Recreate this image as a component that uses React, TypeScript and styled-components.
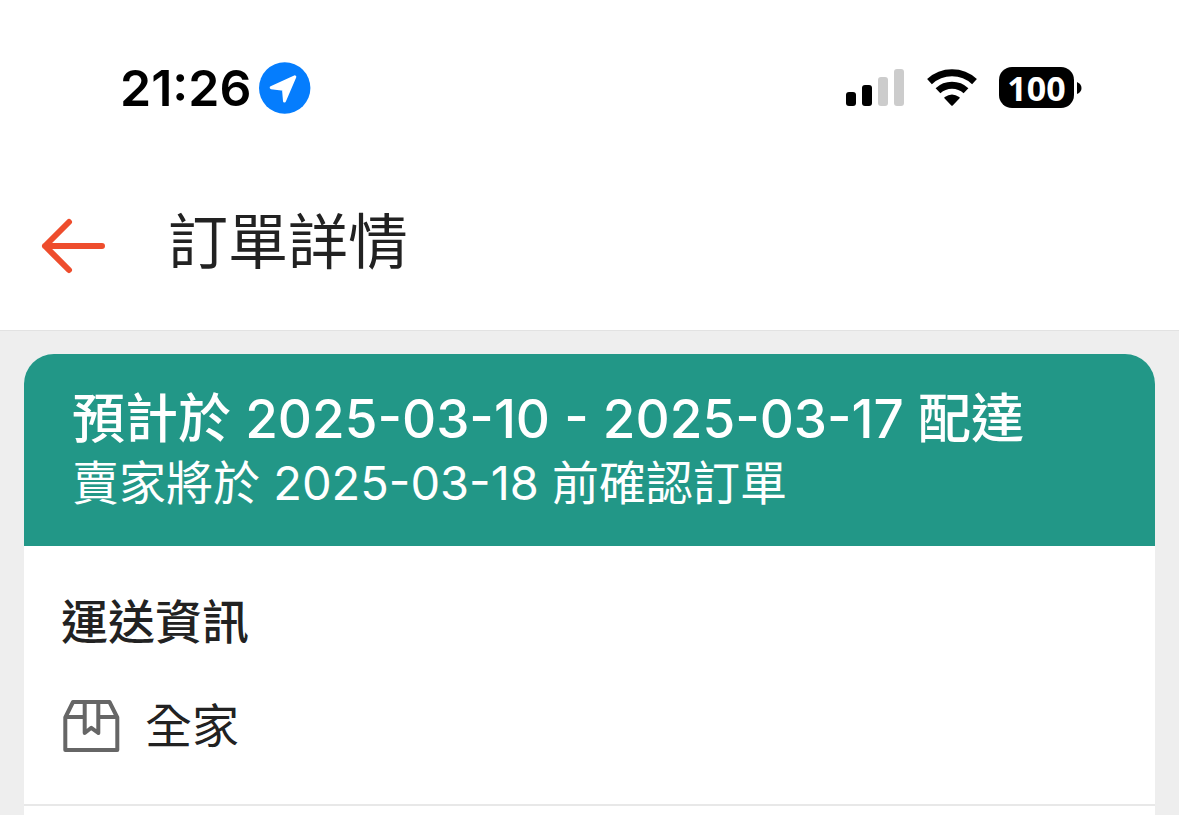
import React from "react";
import styled, { createGlobalStyle } from "styled-components";

const GlobalStyle = createGlobalStyle`
  *, *::before, *::after { box-sizing: border-box; }
  body {
    margin: 0;
    background: #eeeeee;
    color: #222222;
    font-family: Inter, "Noto Sans CJK TC", sans-serif;
  }
  h1, h2, p { margin: 0; }
`;

const Page = styled.div`
  display: flex;
  flex-direction: column;
  min-height: 100vh;
`;

const Top = styled.div`
  background: #ffffff;
  border-bottom: 1px solid #e2e2e2;
`;

const StatusBar = styled.div`
  display: flex;
  align-items: center;
  justify-content: space-between;
  padding: 56px 97px 0 120px;
  height: 120px;
  color: #000000;
`;

const StatusGroup = styled.div<{ $gap: number }>`
  display: flex;
  align-items: center;
  gap: ${(p) => p.$gap}px;
`;

const Clock = styled.time`
  font-size: 50px;
  line-height: 64px;
  font-weight: 600;
`;

const Battery = styled.div`
  display: flex;
  align-items: center;
  gap: 3px;
  height: 42px;
  padding-bottom: 1px;
`;

const BatteryBody = styled.span`
  display: flex;
  align-items: center;
  justify-content: center;
  width: 75px;
  height: 41px;
  border-radius: 13px;
  background: #000000;
  color: #ffffff;
  font: 700 34px/40px "Open Sans", sans-serif;
`;

const NavBar = styled.header`
  display: flex;
  align-items: center;
  gap: 62px;
  height: 210px;
  padding: 34px 40px 0;
`;

const BackButton = styled.button`
  display: flex;
  padding: 8px 0 0;
  border: 0;
  background: none;
  cursor: pointer;
`;

const Title = styled.h1`
  font-size: 60px;
  line-height: 80px;
  font-weight: 400;
`;

const Content = styled.main`
  display: flex;
  flex: 1;
  flex-direction: column;
  padding: 23px 24px 0;
`;

const Card = styled.article`
  flex: 1;
  overflow: hidden;
  border-radius: 30px 30px 0 0;
  background: #ffffff;
`;

const Banner = styled.section`
  padding: 33px 48px 31px;
  background: #229787;
  color: #ffffff;
`;

const BannerTitle = styled.p`
  font-size: 53px;
  line-height: 64px;
  font-weight: 500;
`;

const BannerText = styled.p`
  font-size: 47px;
  line-height: 64px;
  font-weight: 400;
`;

const Shipping = styled.section`
  padding: 44px 37px 46px;
  border-bottom: 2px solid #e8e8e8;
`;

const SectionTitle = styled.h2`
  font-size: 47px;
  line-height: 64px;
  font-weight: 500;
`;

const Carrier = styled.div`
  display: flex;
  align-items: center;
  gap: 24px;
  margin-top: 40px;
`;

const CarrierName = styled.p`
  font-size: 47px;
  line-height: 64px;
`;

const LocationIcon = () => (
  <svg width="52" height="52" viewBox="0 0 52 52" aria-hidden="true">
    <circle cx="25.700" cy="26" r="25.700" fill="#057dfd" />
    <path
      d="M35.800 14.800 12.200 25.700 24.500 27.300 25.500 39Z"
      fill="#fff"
      stroke="#fff"
      strokeWidth="3"
      strokeLinejoin="round"
    />
  </svg>
);

const SignalIcon = () => (
  <svg width="59" height="38" viewBox="0 0 59 38" aria-hidden="true">
    <rect x="0" y="23" width="10" height="14" rx="3" />
    <rect x="16" y="16" width="10" height="21" rx="3" />
    <rect x="32" y="8" width="10" height="29" rx="3" fill="#cccccc" />
    <rect x="48" y="0" width="10" height="37" rx="3" fill="#cccccc" />
  </svg>
);

const WifiIcon = () => (
  <svg width="52" height="38" viewBox="0 0 52 38" aria-hidden="true">
    <g fill="none" stroke="#000" strokeWidth="7">
      <path d="M3.500 12.600A33 33 0 0 1 48.500 12.600" />
      <path d="M12 21.800A20.500 20.500 0 0 1 40 21.800" />
    </g>
    <path d="M18.400 29.300Q17.900 28.600 18.800 28Q26 23 33.200 28Q34.100 28.600 33.600 29.300L26.700 36.500Q26 37.200 25.300 36.500Z" />
  </svg>
);

const BatteryTip = () => (
  <svg width="5" height="14" viewBox="0 0 5 14" aria-hidden="true">
    <path d="M0 1Q4.500 3 4.500 7Q4.500 11 0 13Z" />
  </svg>
);

const BackIcon = () => (
  <svg
    width="66"
    height="56"
    viewBox="0 0 66 56"
    fill="none"
    stroke="#ee4d2d"
    strokeWidth="6"
    strokeLinecap="round"
    strokeLinejoin="round"
    aria-hidden="true"
  >
    <path d="M62 28H5M29 4 5 28 29 52" />
  </svg>
);

const PackageIcon = () => (
  <svg
    width="60"
    height="56"
    viewBox="0 0 60 56"
    fill="none"
    stroke="#666666"
    strokeWidth="4"
    strokeLinejoin="round"
    aria-hidden="true"
  >
    <path d="M4.300 19.500 12 4H48.500L56.300 19.500V52H4.300ZM4.300 19H23.700M37.300 19H56.300M23.700 4V35L30.300 29.800 37.300 35V4" />
  </svg>
);

export default function App() {
  return (
    <Page>
      <GlobalStyle />
      <Top>
        <StatusBar>
          <StatusGroup $gap={8}>
            <Clock>21:26</Clock>
            <LocationIcon />
          </StatusGroup>
          <StatusGroup $gap={21}>
            <SignalIcon />
            <WifiIcon />
            <Battery>
              <BatteryBody>100</BatteryBody>
              <BatteryTip />
            </Battery>
          </StatusGroup>
        </StatusBar>
        <NavBar>
          <BackButton type="button" aria-label="返回">
            <BackIcon />
          </BackButton>
          <Title>訂單詳情</Title>
        </NavBar>
      </Top>
      <Content>
        <Card>
          <Banner>
            <BannerTitle>預計於 2025-03-10 - 2025-03-17 配達</BannerTitle>
            <BannerText>賣家將於 2025-03-18 前確認訂單</BannerText>
          </Banner>
          <Shipping>
            <SectionTitle>運送資訊</SectionTitle>
            <Carrier>
              <PackageIcon />
              <CarrierName>全家</CarrierName>
            </Carrier>
          </Shipping>
        </Card>
      </Content>
    </Page>
  );
}
